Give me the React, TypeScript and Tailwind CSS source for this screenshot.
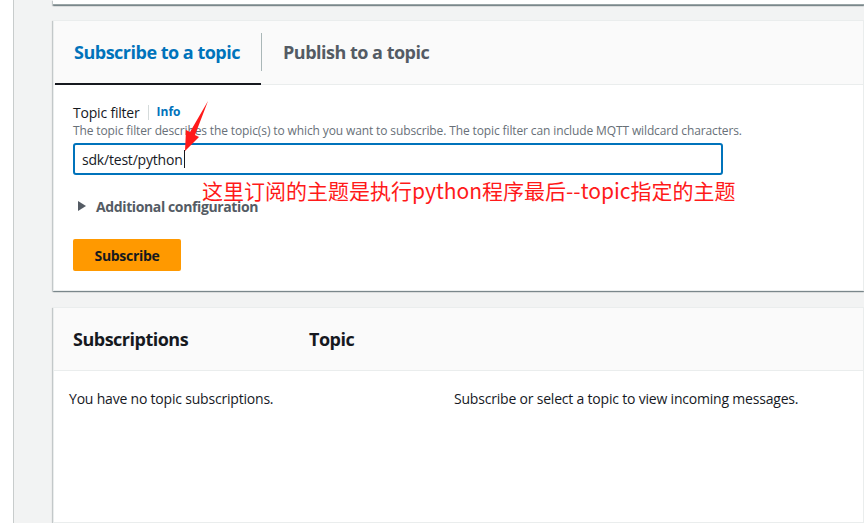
import React from "react";

const font = { fontFamily: '"Open Sans", "Liberation Sans", sans-serif' };

const panelShadow =
  "shadow-[0_1px_1px_0_rgba(0,28,36,0.3),1px_1px_1px_0_rgba(0,28,36,0.15),-1px_1px_1px_0_rgba(0,28,36,0.15)]";

const Arrow = () => (
  <svg
    className="absolute left-0 top-0 pointer-events-none"
    width="864"
    height="523"
    viewBox="0 0 864 523"
  >
    <polygon
      points="208,101 195,135 199,137 185,151 186,130 190,132"
      fill="#ff1a1a"
    />
  </svg>
);

export default function App() {
  return (
    <div
      className="relative w-[864px] h-[523px] overflow-hidden bg-[#f2f3f3] flex text-[#16191f]"
      style={font}
    >
      <div className="w-[14px] shrink-0 bg-white border-r border-[#c8cccc]" />
      <main className="flex-1 pl-[39px] flex flex-col">
        {/* tail of the panel above */}
        <div className={`h-[5px] bg-white border-b border-[#9aa5a6] ${panelShadow}`} />

        {/* subscribe / publish card */}
        <section className={`mt-[15px] bg-white border border-[#eaeded] ${panelShadow}`}>
          <div className="h-[64px] bg-[#fafafa] border-b border-[#eaeded] flex">
            <div className="relative w-[207px] pl-[20px] flex items-center">
              <span className="text-[18px] font-bold text-[#0073bb] tracking-[-0.5px]">
                Subscribe to a topic
              </span>
              <div className="absolute left-[1px] right-0 bottom-[-1px] h-[2px] bg-[#16191f]" />
            </div>
            <div className="w-px h-[38px] bg-[#aab7b8] self-center mt-[-2px]" />
            <div className="pl-[21px] flex items-center">
              <span className="text-[18px] font-bold text-[#545b64] tracking-[-0.5px]">
                Publish to a topic
              </span>
            </div>
          </div>

          <div className="pl-[19px] pt-[17px] pb-[19px]">
            <div className="flex items-center h-[20px]">
              <span className="text-[14px] tracking-[-0.2px]">Topic filter</span>
              <span className="w-px h-[15px] bg-[#d5dbdb] mx-[8px]" />
              <span className="text-[12px] font-bold text-[#0073bb]">Info</span>
            </div>
            <p className="text-[12px] text-[#687078] leading-[16px] mt-[1px] tracking-[-0.12px]">
              The topic filter describes the topic(s) to which you want to subscribe. The topic
              filter can include MQTT wildcard characters.
            </p>
            <div className="mt-[4px] w-[650px] h-[32px] border-2 border-[#0073bb] rounded-[3px] flex items-center pl-[7px] text-[14px] tracking-[-0.2px]">
              sdk/test/python
              <span className="w-px h-[18px] bg-[#16191f] ml-[1px]" />
            </div>

            <div className="mt-[21px] flex items-center pl-[5px] h-[20px]">
              <span className="w-0 h-0 border-y-[5px] border-y-transparent border-l-[8px] border-l-[#545b64]" />
              <span className="ml-[10px] text-[14px] font-bold text-[#545b64] tracking-[-0.38px]">
                Additional configuration
              </span>
            </div>

            <button className="mt-[23px] w-[108px] h-[32px] bg-[#ff9900] rounded-[2px] text-[14px] font-bold text-[#16191f] tracking-[-0.3px]">
              Subscribe
            </button>
          </div>
        </section>

        {/* subscriptions card */}
        <section className={`mt-[16px] flex-1 bg-white border border-[#eaeded] ${panelShadow}`}>
          <div className="h-[63px] bg-[#fafafa] border-b border-[#eaeded] flex items-center pl-[19px]">
            <span className="w-[236px] text-[18px] font-bold tracking-[-0.5px]">Subscriptions</span>
            <span className="text-[18px] font-bold tracking-[-0.5px]">Topic</span>
          </div>
          <div className="flex pt-[17px] text-[14px] tracking-[-0.2px]">
            <span className="pl-[15px] w-[400px]">You have no topic subscriptions.</span>
            <span>Subscribe or select a topic to view incoming messages.</span>
          </div>
        </section>
      </main>

      {/* annotation */}
      <Arrow />
      <div
        className="absolute left-[202px] top-[176px] text-[21px] leading-[28px] text-[#ff1a1a] whitespace-nowrap"
        style={{ fontFamily: '"Noto Sans CJK SC", "Noto Sans", sans-serif' }}
      >
        这里订阅的主题是执行python程序最后--topic指定的主题
      </div>
    </div>
  );
}
